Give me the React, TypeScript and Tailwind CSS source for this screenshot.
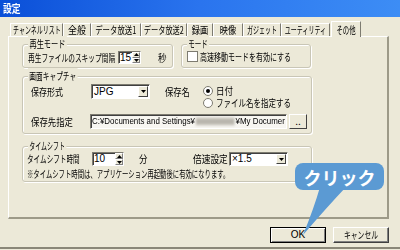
import React from "react";

const jp = "font-['Noto_Sans_CJK_JP',sans-serif]";

// MS UI Gothic is much narrower than Noto, so each label gets squeezed on x
function N({
  s,
  o = "origin-left",
  children,
}: {
  s: string;
  o?: string;
  children: React.ReactNode;
}) {
  return <span className={`inline-block ${o} ${s}`}>{children}</span>;
}

const tabs: { label: string; w: string; s: string }[] = [
  { label: "チャンネルリスト", w: "w-[53px]", s: "scale-x-[0.6]" },
  { label: "全般", w: "w-[28px]", s: "scale-x-[0.9]" },
  { label: "データ放送1", w: "w-[50px]", s: "scale-x-[0.74]" },
  { label: "データ放送2", w: "w-[46px]", s: "scale-x-[0.72]" },
  { label: "録画", w: "w-[26px]", s: "scale-x-[0.82]" },
  { label: "映像", w: "w-[30px]", s: "scale-x-[0.82]" },
  { label: "ガジェット", w: "w-[38px]", s: "scale-x-[0.6]" },
  { label: "ユーティリティ", w: "w-[49px]", s: "scale-x-[0.6]" },
];

function Group({
  title,
  s,
  className,
  children,
}: {
  title: string;
  s: string;
  className: string;
  children: React.ReactNode;
}) {
  return (
    <div
      className={`relative shrink-0 rounded-[3px] border border-[#c9c6b6] [box-shadow:inset_1px_1px_0_#fff,1px_1px_0_#fff] ${className}`}
    >
      <span className="absolute -top-[6px] left-[5px] flex leading-none">
        <N s={s}>
          <span className="bg-[#ece9d8] px-[2px]">{title}</span>
        </N>
      </span>
      {children}
    </div>
  );
}

const sunken =
  "border border-t-[#7d7b70] border-l-[#7d7b70] border-r-white border-b-white [box-shadow:inset_1px_1px_0_#404040]";

function Arrow({ dir }: { dir: "up" | "down" }) {
  return (
    <svg width="5" height="3" viewBox="0 0 5 3">
      <polygon points={dir === "up" ? "2.5,0 5,3 0,3" : "0,0 5,0 2.5,3"} fill="#000" />
    </svg>
  );
}

function Spin({ value, w, h }: { value: string; w: string; h: string }) {
  return (
    <div className={`flex shrink-0 ${w} ${h} ${sunken} bg-white`}>
      <span className="flex flex-1 items-center pl-[1px] font-['Liberation_Sans',sans-serif] text-[10px] leading-none">
        {value}
      </span>
      <div className="flex w-[8px] flex-col">
        <div className="flex flex-1 items-center justify-center border border-t-white border-l-white border-r-[#808080] border-b-[#808080] bg-[#ece9d8]">
          <Arrow dir="up" />
        </div>
        <div className="flex flex-1 items-center justify-center border border-t-white border-l-white border-r-[#808080] border-b-[#808080] bg-[#ece9d8]">
          <Arrow dir="down" />
        </div>
      </div>
    </div>
  );
}

function Select({ value, h }: { value: string; h: string }) {
  return (
    <div className={`flex w-[59px] shrink-0 ${h} ${sunken} bg-white`}>
      <span className="flex flex-1 items-center pl-[2px] font-['Liberation_Sans',sans-serif] text-[10px] leading-none">
        {value}
      </span>
      <div className="m-[1px] flex w-[10px] items-center justify-center border border-t-white border-l-white border-r-[#404040] border-b-[#404040] bg-[#ece9d8]">
        <svg width="5" height="3" viewBox="0 0 5 3">
          <polygon points="0,0 5,0 2.5,3" fill="#000" />
        </svg>
      </div>
    </div>
  );
}

function Radio({ checked }: { checked?: boolean }) {
  return (
    <span className="flex h-[10px] w-[10px] shrink-0 items-center justify-center rounded-full border border-[#7d7b70] bg-white">
      {checked && <span className="h-[4px] w-[4px] rounded-full bg-black" />}
    </span>
  );
}

function Button({ children, primary }: { children: React.ReactNode; primary?: boolean }) {
  return (
    <div
      className={`flex h-[16px] w-[56px] items-center justify-center bg-[#ece9d8] leading-none ${
        primary
          ? "border border-black [box-shadow:inset_1px_1px_0_#fff,inset_-1px_-1px_0_#808080]"
          : "border border-t-white border-l-white border-r-[#404040] border-b-[#404040] [box-shadow:inset_-1px_-1px_0_#808080]"
      }`}
    >
      {children}
    </div>
  );
}

export default function App() {
  return (
    <div
      className={`relative flex h-[250px] w-[400px] flex-col overflow-hidden whitespace-nowrap bg-[#ece9d8] text-[10px] text-black ${jp}`}
    >
      <div className="flex h-[17px] items-center bg-gradient-to-r from-[#0a4fd8] via-[#2a74ee] to-[#3d8df5] pl-[3px] text-[11px] font-bold text-white">
        <N s="scale-x-[0.8]">設定</N>
      </div>

      <div className="flex h-[19px] items-end pl-[10px]">
        {tabs.map((t) => (
          <div
            key={t.label}
            className={`flex h-[13px] shrink-0 ${t.w} items-center justify-center border-r border-l border-t border-r-[#7d7b70] border-l-white border-t-white leading-none`}
          >
            <N s={t.s} o="origin-center">
              {t.label}
            </N>
          </div>
        ))}
        <div className="relative z-10 -mb-[1px] ml-[1px] flex h-[16px] w-[30px] items-center justify-center border border-b-0 border-t-white border-l-white border-r-[#7d7b70] bg-[#ece9d8] leading-none">
          <N s="scale-x-[0.64]" o="origin-center">
            その他
          </N>
        </div>
      </div>

      <div className="ml-[8px] flex h-[183px] w-[381px] flex-col border-t border-l border-t-white border-l-white border-r-2 border-b-2 border-r-[#9d9a88] border-b-[#9d9a88] pl-[13px]">
        <div className="mt-[7px] flex gap-[8px]">
          <Group title="再生モード" s="scale-x-[0.72]" className="h-[24px] w-[151px]">
            <div className="flex items-center pl-[5px] pt-[6px] leading-none">
              <span className="w-[90px] shrink-0">
                <N s="scale-x-[0.67]">再生ファイルのスキップ間隔</N>
              </span>
              <Spin value="15" w="w-[23px]" h="h-[13px]" />
              <span className="ml-[17px]">
                <N s="scale-x-[0.85]">秒</N>
              </span>
            </div>
          </Group>
          <Group title="モード" s="scale-x-[0.65]" className="h-[24px] w-[130px]">
            <div className="flex items-center gap-[2px] pl-[5px] pt-[6px] leading-none">
              <span className="h-[11px] w-[11px] shrink-0 border border-[#7d7b70] bg-white" />
              <span className="w-[100px] shrink-0">
                <N s="scale-x-[0.7]">高速移動モードを有効にする</N>
              </span>
            </div>
          </Group>
        </div>

        <Group title="画面キャプチャ" s="scale-x-[0.67]" className="mt-[8px] h-[58px] w-[290px]">
          <div className="flex flex-col pl-[8px] pt-[7px] leading-none">
            <div className="flex items-start">
              <span className="flex h-[15px] w-[60px] shrink-0 items-center">
                <N s="scale-x-[0.8]">保存形式</N>
              </span>
              <Select value="JPG" h="h-[15px]" />
              <span className="ml-[15px] flex h-[15px] w-[38px] shrink-0 items-center">
                <N s="scale-x-[0.83]">保存名</N>
              </span>
              <div className="mt-[1px] flex w-[90px] shrink-0 flex-col">
                <div className="flex h-[12px] items-center gap-[3px]">
                  <Radio checked />
                  <N s="scale-x-[0.85]">日付</N>
                </div>
                <div className="flex h-[12px] items-center gap-[3px]">
                  <Radio />
                  <N s="scale-x-[0.75]">ファイル名を指定する</N>
                </div>
              </div>
            </div>
            <div className="mt-[5px] flex items-center">
              <span className="w-[59px] shrink-0">
                <N s="scale-x-[0.84]">保存先指定</N>
              </span>
              <div
                className={`flex h-[15px] w-[197px] shrink-0 items-center overflow-hidden bg-[#f7f6f1] pl-[1px] font-['Liberation_Sans',sans-serif] text-[9px] ${sunken}`}
              >
                <N s="scale-x-[0.88]">
                  C:¥Documents and Settings¥
                  <span className="mx-[1px] inline-block h-[7px] w-[44px] bg-[#b9b6ad] align-middle blur-[1.5px]" />
                  ¥My Documer
                </N>
              </div>
              <div className="ml-[2px] flex h-[15px] w-[18px] shrink-0 items-end justify-center border border-t-white border-l-white border-r-[#404040] border-b-[#404040] pb-[2px]">
                ..
              </div>
            </div>
          </div>
        </Group>

        <Group title="タイムシフト" s="scale-x-[0.6]" className="mt-[12px] h-[36px] w-[290px]">
          <div className="flex flex-col pl-[4px] pt-[5px] leading-none">
            <div className="flex items-center">
              <span className="w-[65px] shrink-0">
                <N s="scale-x-[0.66]">タイムシフト時間</N>
              </span>
              <Spin value="10" w="w-[32px]" h="h-[14px]" />
              <span className="ml-[15px] w-[54px] shrink-0">
                <N s="scale-x-[0.85]">分</N>
              </span>
              <span className="w-[36px] shrink-0">
                <N s="scale-x-[0.87]">倍速設定</N>
              </span>
              <Select value="×1.5" h="h-[14px]" />
            </div>
            <div className="mt-[3px]">
              <N s="scale-x-[0.635]">※タイムシフト時間は、アプリケーション再起動後に有効になります。</N>
            </div>
          </div>
        </Group>
      </div>

      <div className="mt-[8px] flex gap-[7px] pl-[270px]">
        <Button primary>
          <span className="font-['Liberation_Sans',sans-serif] text-[10px]">OK</span>
        </Button>
        <Button>
          <N s="scale-x-[0.68]" o="origin-center">
            キャンセル
          </N>
        </Button>
      </div>

      <div className="mt-auto mb-[1px] h-[2px] bg-[#8a8778]" />

      <svg className="absolute left-[300px] top-[186px]" width="50" height="52" viewBox="0 0 50 52">
        <path d="M20 1 L46 1 Q28 20 3 49 Q14 22 20 1 Z" fill="#5b9ad3" />
      </svg>
      <div className="absolute left-[295px] top-[163px] flex h-[27px] w-[89px] items-center justify-center rounded-[8px] bg-[#5b9ad3] text-[18px] font-bold leading-none text-white">
        クリック
      </div>
    </div>
  );
}
